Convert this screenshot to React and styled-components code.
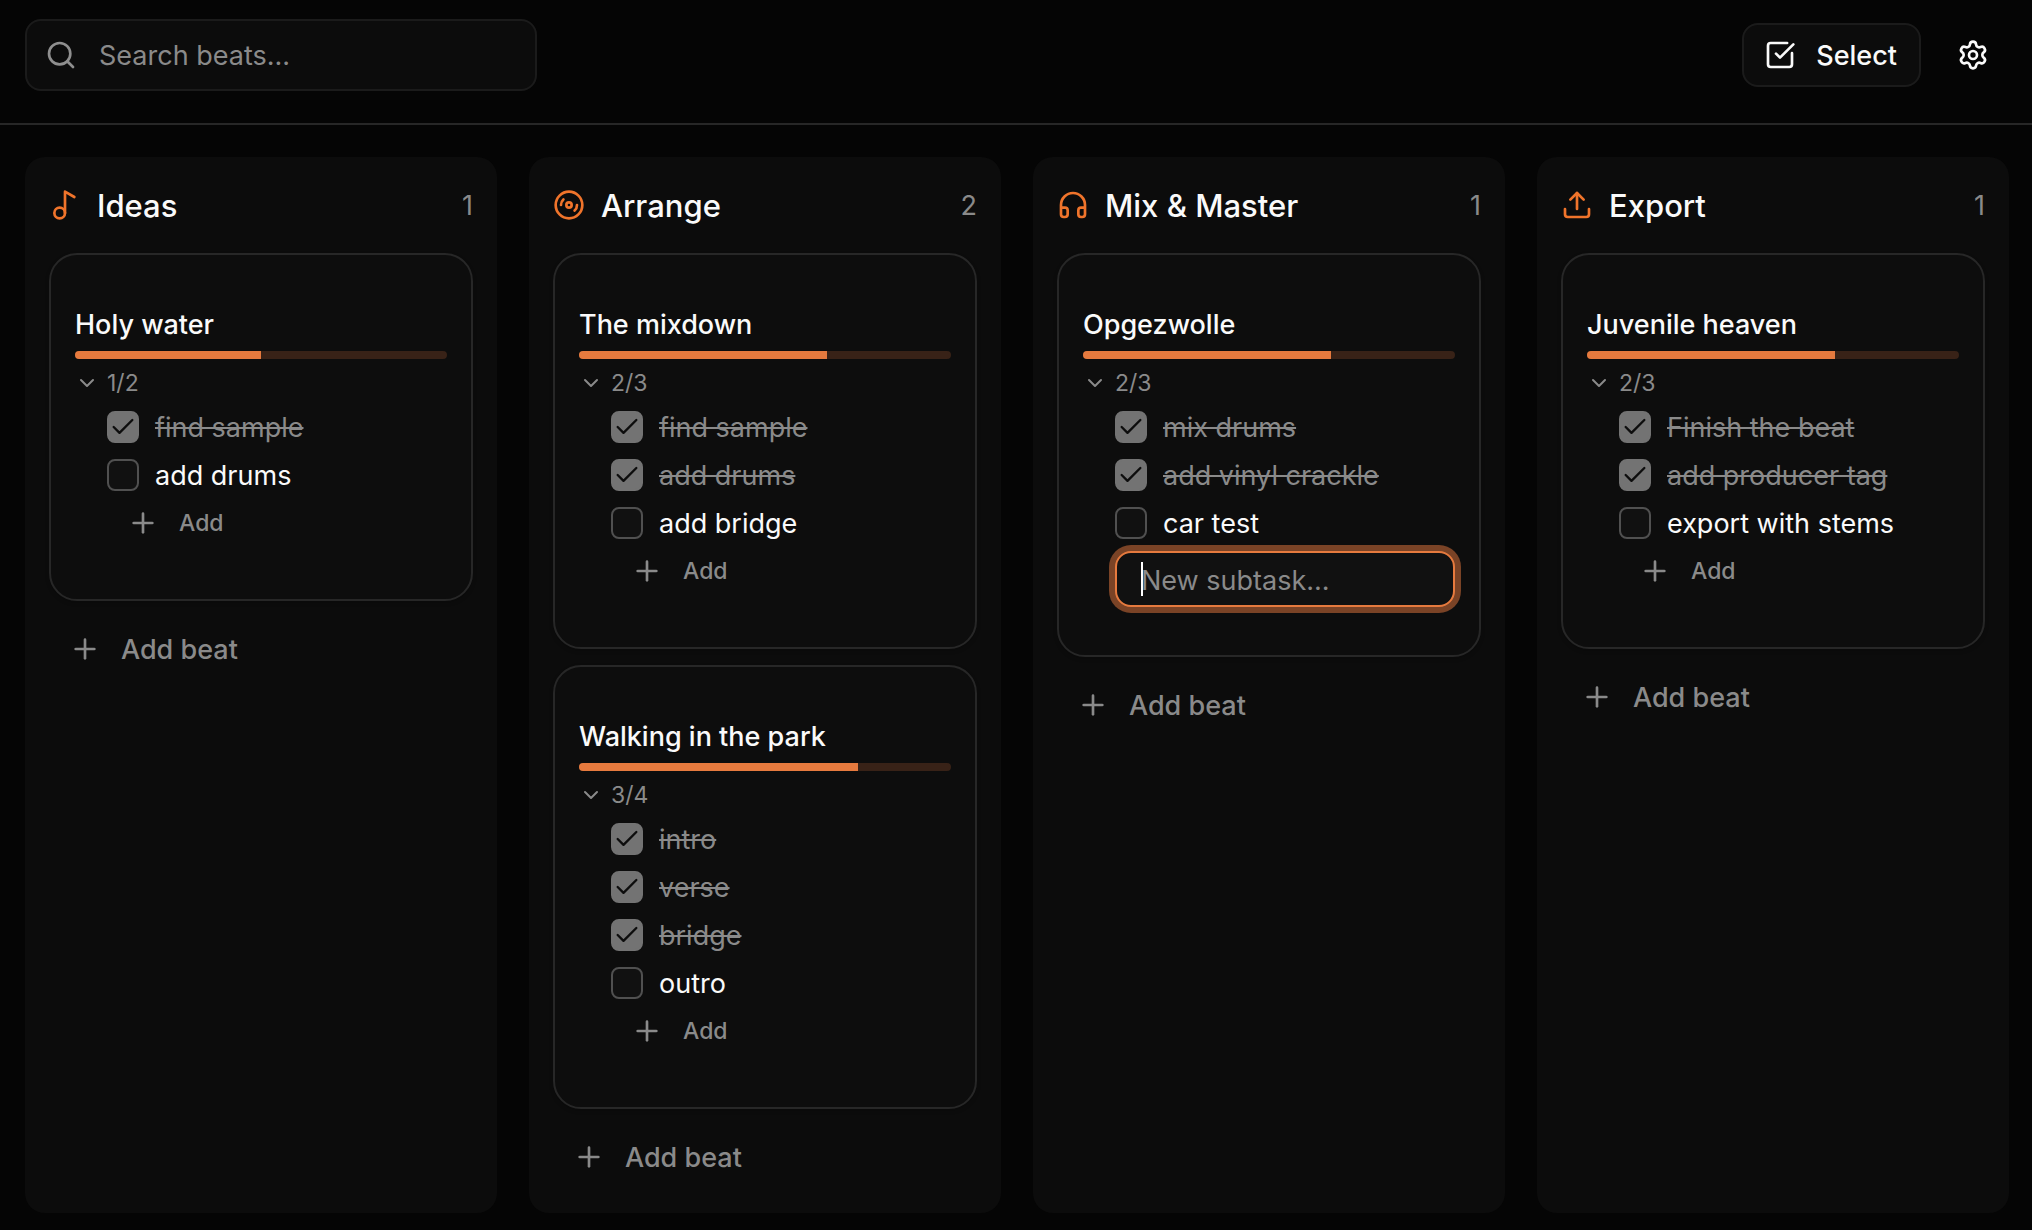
import React, { useState } from "react";
import styled, { createGlobalStyle } from "styled-components";
import {
  Check,
  ChevronDown,
  Disc3,
  Headphones,
  Music2,
  Plus,
  Search,
  Settings,
  SquareCheckBig,
  Upload,
} from "lucide-react";

const initialColumns = [
  {
    id: "ideas",
    title: "Ideas",
    icon: Music2,
    beats: [
      {
        title: "Holy water",
        tasks: [
          { text: "find sample", done: true },
          { text: "add drums", done: false },
        ],
      },
    ],
  },
  {
    id: "arrange",
    title: "Arrange",
    icon: Disc3,
    beats: [
      {
        title: "The mixdown",
        tasks: [
          { text: "find sample", done: true },
          { text: "add drums", done: true },
          { text: "add bridge", done: false },
        ],
      },
      {
        title: "Walking in the park",
        tasks: [
          { text: "intro", done: true },
          { text: "verse", done: true },
          { text: "bridge", done: true },
          { text: "outro", done: false },
        ],
      },
    ],
  },
  {
    id: "mix",
    title: "Mix & Master",
    icon: Headphones,
    beats: [
      {
        title: "Opgezwolle",
        adding: true,
        tasks: [
          { text: "mix drums", done: true },
          { text: "add vinyl crackle", done: true },
          { text: "car test", done: false },
        ],
      },
    ],
  },
  {
    id: "export",
    title: "Export",
    icon: Upload,
    beats: [
      {
        title: "Juvenile heaven",
        tasks: [
          { text: "Finish the beat", done: true },
          { text: "add producer tag", done: true },
          { text: "export with stems", done: false },
        ],
      },
    ],
  },
];

function BeatCard({ beat }) {
  const [tasks, setTasks] = useState(beat.tasks);
  const [open, setOpen] = useState(true);
  const [adding, setAdding] = useState(Boolean(beat.adding));
  const [draft, setDraft] = useState("");
  const done = tasks.filter((task) => task.done).length;

  const toggle = (index) =>
    setTasks(
      tasks.map((task, i) =>
        i === index ? { ...task, done: !task.done } : task
      )
    );

  const addTask = (e) => {
    e.preventDefault();
    if (draft.trim()) setTasks([...tasks, { text: draft, done: false }]);
    setDraft("");
    setAdding(false);
  };

  return (
    <Card>
      <BeatTitle>{beat.title}</BeatTitle>
      <Progress>
        <ProgressFill style={{ width: `${(done / tasks.length) * 100}%` }} />
      </Progress>
      <Toggle type="button" onClick={() => setOpen(!open)}>
        <ChevronDown size={24} />
        {done}/{tasks.length}
      </Toggle>
      {open && (
        <Subtasks>
          {tasks.map((task, index) => (
            <Task key={index} $done={task.done}>
              <TickBox>
                <input
                  type="checkbox"
                  checked={task.done}
                  onChange={() => toggle(index)}
                />
                {task.done && <Check size={28} />}
              </TickBox>
              <span>{task.text}</span>
            </Task>
          ))}
          {adding ? (
            <NewTask onSubmit={addTask}>
              <input
                type="text"
                aria-label="New subtask"
                placeholder="New subtask..."
                value={draft}
                onChange={(e) => setDraft(e.target.value)}
              />
              {!draft && <Caret />}
            </NewTask>
          ) : (
            <AddTask type="button" onClick={() => setAdding(true)}>
              <Plus size={32} />
              Add
            </AddTask>
          )}
        </Subtasks>
      )}
    </Card>
  );
}

export default function App() {
  return (
    <Page>
      <GlobalStyle />
      <Header>
        <SearchBox>
          <Search size={32} />
          <input
            type="text"
            aria-label="Search beats"
            placeholder="Search beats..."
          />
        </SearchBox>
        <Actions>
          <SelectButton type="button">
            <SquareCheckBig size={32} />
            <span>Select</span>
          </SelectButton>
          <SettingsButton type="button" aria-label="Settings">
            <Settings size={32} />
          </SettingsButton>
        </Actions>
      </Header>
      <Board>
        {initialColumns.map(({ id, title, icon: Icon, beats }) => (
          <Column key={id}>
            <ColumnHeader>
              <Icon size={32} />
              <h2>{title}</h2>
              <span>{beats.length}</span>
            </ColumnHeader>
            <Cards>
              {beats.map((beat) => (
                <BeatCard key={beat.title} beat={beat} />
              ))}
              <AddBeat type="button">
                <Plus size={32} />
                <span>Add beat</span>
              </AddBeat>
            </Cards>
          </Column>
        ))}
      </Board>
    </Page>
  );
}

const GlobalStyle = createGlobalStyle`
  * {
    box-sizing: border-box;
  }
  body {
    margin: 0;
    background: #050505;
    color: #fafafa;
    font-family: Inter, "Liberation Sans", sans-serif;
    font-size: 27px;
    line-height: 40px;
    -webkit-font-smoothing: antialiased;
  }
  button,
  input {
    font: inherit;
    color: inherit;
  }
  button {
    padding: 0;
    border: none;
    background: none;
    cursor: pointer;
  }
  svg {
    display: block;
    flex: none;
  }
`;

const Page = styled.div`
  min-height: 100vh;
  display: flex;
  flex-direction: column;
`;

const Header = styled.header`
  display: flex;
  align-items: center;
  justify-content: space-between;
  padding: 19px 23px 32px 25px;
  border-bottom: 2px solid #272727;
`;

const SearchBox = styled.label`
  display: flex;
  align-items: center;
  gap: 22px;
  width: 512px;
  height: 72px;
  padding: 0 18px;
  background: #0c0c0c;
  border: 2px solid #1b1b1b;
  border-radius: 16px;
  color: #8f8f8f;
  input {
    flex: 1;
    min-width: 0;
    padding: 2px 0 0;
    border: none;
    outline: none;
    background: none;
    color: #fafafa;
  }
  input::placeholder {
    color: #8a8a8a;
    opacity: 1;
  }
`;

const Actions = styled.div`
  display: flex;
  align-items: center;
  gap: 16px;
`;

const SelectButton = styled.button`
  display: flex;
  align-items: center;
  gap: 20px;
  height: 64px;
  padding: 0 22px 0 20px;
  background: #0c0c0c;
  border: 2px solid #1b1b1b;
  border-radius: 16px;
  font-weight: 500;
  span {
    padding-top: 2px;
  }
`;

const SettingsButton = styled.button`
  display: flex;
  align-items: center;
  justify-content: center;
  width: 72px;
  height: 64px;
`;

const Board = styled.main`
  flex: 1;
  display: grid;
  grid-template-columns: repeat(4, minmax(0, 1fr));
  gap: 32px;
  padding: 32px 23px 17px 25px;
`;

const Column = styled.section`
  padding: 24px;
  background: #0c0c0c;
  border-radius: 20px;
`;

const ColumnHeader = styled.div`
  display: flex;
  align-items: center;
  gap: 16px;
  height: 48px;
  margin-bottom: 24px;
  color: #f0742b;
  h2 {
    flex: 1;
    margin: 0;
    padding-top: 2px;
    font-size: 31px;
    font-weight: 500;
    color: #fafafa;
  }
  span {
    padding-top: 2px;
    color: #8a8a8a;
  }
`;

const Cards = styled.div`
  display: flex;
  flex-direction: column;
  gap: 16px;
`;

const Card = styled.article`
  padding: 48px 24px;
  background: #0d0d0d;
  border: 2px solid #272727;
  border-radius: 28px;
  box-shadow: 0 2px 4px rgba(0, 0, 0, 0.2);
`;

const BeatTitle = styled.h3`
  margin: 0 0 6px;
  padding-top: 2px;
  font-size: 27px;
  font-weight: 500;
`;

const Progress = styled.div`
  height: 8px;
  margin-bottom: 8px;
  background: #382217;
  border-radius: 4px;
  overflow: hidden;
`;

const ProgressFill = styled.div`
  height: 100%;
  background: #e67a3e;
`;

const Toggle = styled.button`
  display: flex;
  align-items: center;
  gap: 8px;
  height: 32px;
  margin-bottom: 4px;
  font-size: 23px;
  color: #8a8a8a;
`;

const Subtasks = styled.div`
  padding-left: 32px;
`;

const Task = styled.label`
  display: flex;
  align-items: center;
  gap: 16px;
  height: 48px;
  span:last-child {
    padding-top: 2px;
    color: ${(props) => (props.$done ? "#8a8a8a" : "#fafafa")};
    text-decoration: ${(props) => (props.$done ? "line-through" : "none")};
    text-decoration-thickness: 2px;
  }
`;

const TickBox = styled.span`
  display: grid;
  place-items: center;
  flex: none;
  width: 32px;
  height: 32px;
  color: #0d0d0d;
  input,
  svg {
    grid-area: 1 / 1;
  }
  input {
    appearance: none;
    width: 32px;
    height: 32px;
    margin: 0;
    background: #111111;
    border: 2px solid #505050;
    border-radius: 8px;
  }
  input:checked {
    background: #737373;
    border-color: #737373;
  }
  svg {
    pointer-events: none;
  }
`;

const AddTask = styled.button`
  display: flex;
  align-items: center;
  gap: 20px;
  height: 48px;
  margin: 0 0 4px 20px;
  font-size: 23px;
  font-weight: 500;
  color: #8a8a8a;
`;

const NewTask = styled.form`
  position: relative;
  margin-top: 4px;
  input {
    display: block;
    width: 100%;
    height: 56px;
    padding: 2px 24px 0;
    background: #111111;
    border: 2px solid #e67a3e;
    border-radius: 16px;
    outline: none;
    box-shadow: 0 0 0 6px #7a4326;
  }
  input::placeholder {
    color: #8a8a8a;
    opacity: 1;
  }
`;

const Caret = styled.span`
  position: absolute;
  top: 11px;
  left: 26px;
  width: 2px;
  height: 34px;
  background: #ffffff;
  pointer-events: none;
`;

const AddBeat = styled.button`
  display: flex;
  align-items: center;
  gap: 20px;
  height: 64px;
  padding: 0 20px;
  font-weight: 500;
  color: #8a8a8a;
  span {
    padding-top: 2px;
  }
`;
